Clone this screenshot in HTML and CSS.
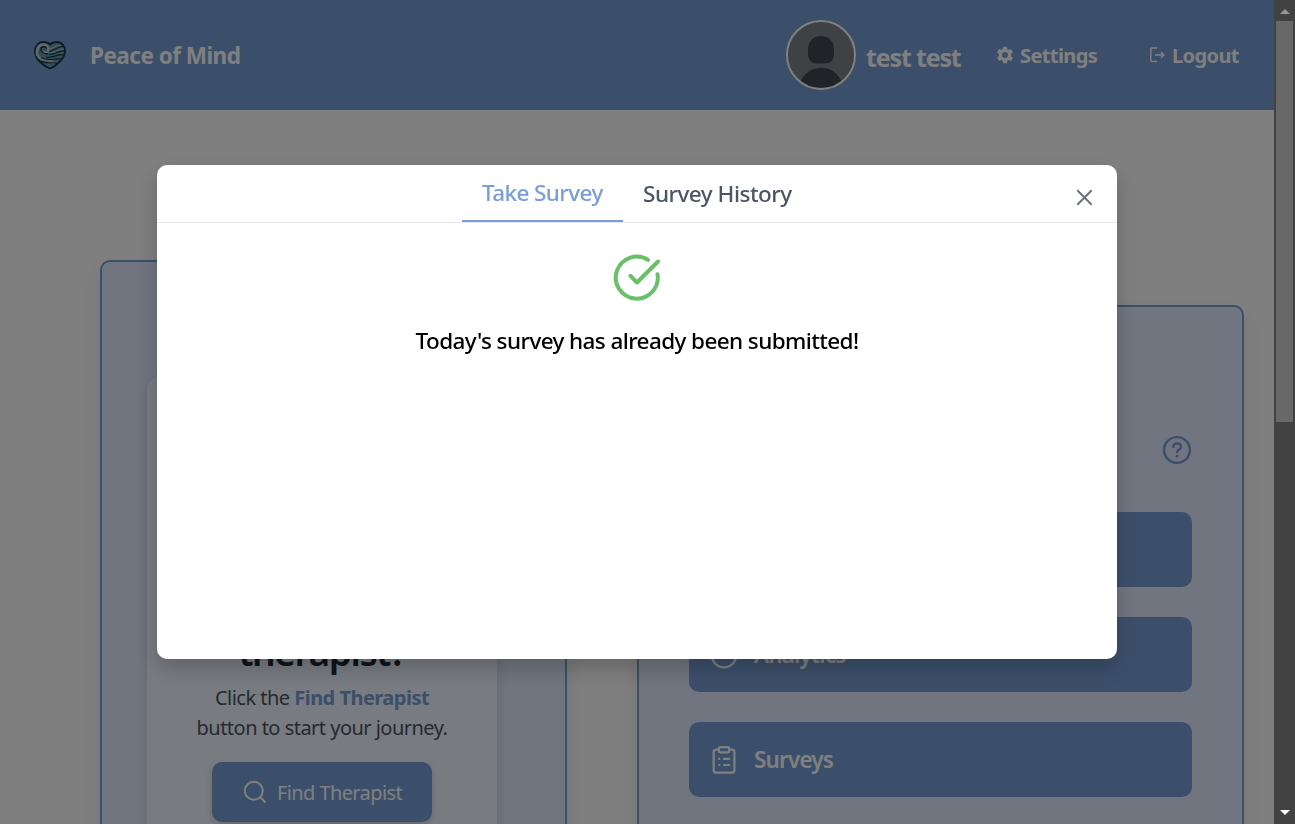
FILE: index.html
```html
<!DOCTYPE html>
<html lang="en">
<head>
<meta charset="utf-8">
<title>Peace of Mind</title>
<link rel="stylesheet" href="styles.css">
</head>
<body>
<div class="page">
  <header class="navbar">
    <svg class="logo" width="32" height="29" viewBox="0 0 32 29">
      <path d="M16 27.500C10 25 1.500 19 1 11 .8 5 4.500 1 9 1c3 0 5.500 1 7 2.500C17.500 2 20 1 23 1c4.500 0 8.200 4 8 9.500C30.500 18 22 25 16 27.500Z" fill="#649fb0" stroke="#1c3044" stroke-width="1.800"/>
      <path d="M3.500 15C1.500 8 5 3.500 9 3.500c4 0 6 3 5.500 5.500-.5 2.500-4 3.500-5.500 1.500M4 15c4 6 10 2 16 7" fill="none" stroke="#c3d0d2" stroke-width="2.600"/>
      <path d="M12.500 7.500c-1-2.500-5-2.500-5.500 .5-.3 3 3.500 5.500 7 4.500" fill="none" stroke="#1c3044" stroke-width="1.400"/>
      <path d="M15 10.500c5-1 8-5 14-5M15 13.500c6 0 9-4 15-3.500M12 16c7 2 12-4 18-2M7 16.500c8 5 14-.5 21 2M5 19.500c7 4 13 1 19 3" fill="none" stroke="#1c3044" stroke-width="1.200"/>
      <path d="M15 8.500c4-1 7-4.500 12-4.500M15 12c6 0 9-4 15-4" fill="none" stroke="#b4c8cc" stroke-width="1"/>
    </svg>
    <span class="brand">Peace of Mind</span>
    <svg class="avatar" width="70" height="70" viewBox="0 0 70 70">
      <defs><clipPath id="avatar-clip"><circle cx="35" cy="35" r="34"/></clipPath></defs>
      <circle cx="35" cy="35" r="34" fill="#7c8489"/>
      <g clip-path="url(#avatar-clip)" fill="#40474f">
        <path d="M35 16c8 0 13 6 13 13v4c0 7-3 10.500-9 10.500h-8c-6 0-9-3.500-9-10.500v-4c0-7 5-13 13-13Z"/>
        <ellipse cx="35" cy="69.700" rx="22" ry="22"/>
      </g>
      <circle cx="35" cy="35" r="34" fill="none" stroke="#fff" stroke-width="2"/>
    </svg>
    <span class="username">test test</span>
    <a class="nav-link settings">
      <svg width="18" height="18" viewBox="0 0 24 24"><path fill="#fff" fill-rule="evenodd" d="M9.500 1h5l.6 3.200 1.700 1 3.200-1.100 2.500 4.300-2.500 2.200v2.800l2.500 2.200-2.500 4.300-3.200-1.100-1.700 1-.6 3.200h-5l-.6-3.200-1.700-1L4 19.900l-2.500-4.300L4 13.400v-2.800L1.500 8.400 4 4.100l3.200 1.100 1.700-1ZM12 8a4 4 0 1 0 0 8 4 4 0 0 0 0-8Z"/></svg>
      <span>Settings</span>
    </a>
    <a class="nav-link logout">
      <svg width="16" height="16" viewBox="0 0 16 16" fill="none" stroke="#fff" stroke-width="1.500"><path d="M8 1H2.800Q1.800 1 1.800 2v11.500q0 1 1 1H8M6 8h8.500M12 5.200 14.800 8 12 10.800"/></svg>
      <span>Logout</span>
    </a>
  </header>
  <main class="dashboard">
    <section class="panel intro">
      <div class="intro-card">
        <h2 class="intro-title">therapist?</h2>
        <p class="intro-text">Click the <b>Find Therapist</b><br>button to start your journey.</p>
        <a class="find-button">
          <svg width="24" height="24" viewBox="0 0 24 24" fill="none" stroke="#fff" stroke-width="2"><circle cx="10.800" cy="10.800" r="9"/><path d="m17 17 5.500 5.500"/></svg>
          <span>Find Therapist</span>
        </a>
      </div>
    </section>
    <section class="panel actions">
      <svg class="help" width="30" height="30" viewBox="0 0 30 30" fill="none" stroke="#789ed4" stroke-width="2.400" stroke-linecap="round"><circle cx="15" cy="15" r="12.900"/><path d="M11.200 11.800c.3-2.200 1.800-3.300 3.900-3.300 2.300 0 3.900 1.300 3.900 3.400 0 2.700-3.900 2.900-3.900 5.100"/><path d="M15 21.200v.1" stroke-width="2.700"/></svg>
      <a class="action"></a>
      <a class="action">
        <svg width="28" height="28" viewBox="0 0 28 28" fill="none" stroke="#fff" stroke-width="2.300"><circle cx="14" cy="14" r="12.300"/></svg>
        <span>Analytics</span>
      </a>
      <a class="action">
        <svg width="28" height="28" viewBox="0 0 28 28" fill="none" stroke="#fff" stroke-width="2.200" stroke-linecap="round" stroke-linejoin="round"><path d="M8.700 3.700H6Q3.700 3.700 3.700 6v18.300Q3.700 26.700 6 26.700h16q2.400 0 2.400-2.400V6Q24.400 3.700 22 3.700h-2.600"/><rect x="8.900" y="1.100" width="10.300" height="5.200" rx="1.200"/><path d="M9 12.900h.2M14 12.900h5.300M9 19h.2M14 19h5.300"/></svg>
        <span>Surveys</span>
      </a>
    </section>
  </main>
</div>
<div class="scrollbar">
  <i class="arrow-up"></i>
  <div class="thumb"></div>
  <i class="arrow-down"></i>
</div>
<div class="overlay">
  <div class="modal">
    <div class="tabs">
      <a class="tab active"><span>Take Survey</span></a>
      <a class="tab"><span>Survey History</span></a>
      <svg class="close" width="17" height="17" viewBox="0 0 17 17" fill="none" stroke="#6b7280" stroke-width="2"><path d="m1.300 1.300 14.400 14.400M15.700 1.300 1.300 15.700"/></svg>
    </div>
    <div class="modal-body">
      <svg width="50" height="50" viewBox="0 0 50 50" fill="none" stroke="#68c168" stroke-width="4" stroke-linecap="round" stroke-linejoin="round"><path d="M36 6.900A21 21 0 1 0 45.500 21.300M18.500 22.800 25 29.500 46 8.500"/></svg>
      <p class="message">Today's survey has already been submitted!</p>
    </div>
  </div>
</div>
</body>
</html>
```
FILE: styles.css
```css
* { box-sizing: border-box; }
body {
  margin: 0;
  width: 1295px;
  height: 824px;
  overflow: hidden;
  display: flex;
  background: #fff;
  font-family: "Noto Sans", "Open Sans", sans-serif;
}
svg { display: block; flex: none; }
span, p, h2, b { white-space: nowrap; }
.page { width: 1274px; height: 824px; overflow: hidden; flex: none; }
.navbar {
  height: 110px;
  background: #789ed4;
  color: #fff;
  display: flex;
  align-items: center;
  padding: 0 35px 0 34px;
  font-weight: 700;
}
.brand { margin-left: 24px; font-size: 22.500px; letter-spacing: -0.520px; padding-top: 1px; }
.avatar { margin-left: auto; }
.username { margin-left: 10px; width: 95px; font-size: 25px; letter-spacing: -1.150px; padding-top: 3px; }
.nav-link { display: flex; align-items: center; font-size: 20px; }
.nav-link span { padding-top: 1px; }
.settings { margin-left: 35px; gap: 6px; width: 101px; letter-spacing: -0.600px; }
.logout { margin-left: 52px; gap: 7px; width: 90px; letter-spacing: -0.600px; }
.dashboard { display: flex; gap: 70px; align-items: flex-start; padding: 150px 30px 0 100px; }
.panel {
  border: 2px solid #789ed4;
  border-radius: 10px;
  background: #e1eafe;
  box-shadow: 0 10px 20px rgba(0, 0, 0, .1);
  height: 720px;
  flex: none;
}
.intro { width: 467px; padding: 116px 68px 0 45px; }
.intro-card {
  width: 350px;
  height: 560px;
  border-radius: 10px;
  background: #f0f6fe;
  box-shadow: 0 4px 12px rgba(0, 0, 0, .12);
  padding-top: 246px;
  display: flex;
  flex-direction: column;
  align-items: center;
}
.intro-title { margin: 0; font-size: 37px; line-height: 56px; font-weight: 600; letter-spacing: -1.400px; color: #1f2937; }
.intro-text { margin: 3px 0 0; font-size: 20px; line-height: 30px; text-align: center; color: #4b5563; letter-spacing: -0.520px; }
.intro-text b { color: #789ed4; }
.find-button {
  margin-top: 19px;
  width: 220px;
  height: 60px;
  border-radius: 10px;
  background: #789ed4;
  box-shadow: 0 3px 7px rgba(0, 0, 0, .15);
  color: #fff;
  font-size: 20px;
  letter-spacing: -0.600px;
  display: flex;
  align-items: center;
  padding-left: 31px;
  gap: 10px;
}
.actions { width: 607px; margin-top: 45px; padding: 128px 50px 0; display: flex; flex-direction: column; gap: 30px; }
.help { align-self: flex-end; margin-bottom: 17px; }
.action {
  height: 75px;
  flex: none;
  border-radius: 10px;
  background: #789ed4;
  color: #fff;
  display: flex;
  align-items: center;
  gap: 16px;
  padding-left: 21px;
  font-size: 22.500px;
  font-weight: 600;
  letter-spacing: -0.850px;
}
.scrollbar {
  width: 21px;
  height: 824px;
  flex: none;
  background: #424242;
  display: flex;
  flex-direction: column;
  align-items: center;
  position: relative;
  z-index: 2;
}
.thumb { width: 17px; height: 401px; margin-top: 7px; background: #686868; }
.arrow-up { margin-top: 9px; border: 5px solid transparent; border-top: 0; border-bottom-color: #969696; }
.arrow-down { margin-top: auto; margin-bottom: 9px; border: 5px solid transparent; border-bottom: 0; border-top-color: #fff; }
.overlay {
  position: fixed;
  inset: 0 21px 0 0;
  background: rgba(0, 0, 0, .5);
  display: flex;
  align-items: center;
  justify-content: center;
}
.modal { width: 960px; height: 494px; border-radius: 10px; background: #fff; box-shadow: 0 10px 22px rgba(0, 0, 0, .2); }
.tabs { height: 58px; border-bottom: 1px solid #e5e7eb; display: flex; padding-left: 305px; }
.tab { width: 189px; height: 57px; padding-left: 20px; font-size: 22.500px; line-height: 34px; padding-top: 12px; font-weight: 500; color: #4b5563; letter-spacing: -0.500px; }
.tab.active { width: 161px; padding-top: 11px; color: #789ed4; border-bottom: 2px solid #789ed4; letter-spacing: -0.600px; }
.close { margin: 24px 24px 0 auto; }
.modal-body { display: flex; flex-direction: column; align-items: center; padding-top: 30px; }
.message { margin: 21px 0 0; font-size: 22.500px; line-height: 34px; font-weight: 500; color: #000; letter-spacing: -0.600px; }
```
